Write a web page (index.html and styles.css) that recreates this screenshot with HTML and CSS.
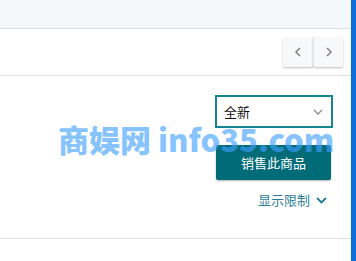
FILE: index.html
```html
<!DOCTYPE html>
<html lang="zh">
<head>
<meta charset="utf-8">
<link rel="stylesheet" href="styles.css">
</head>
<body>
<div class="page">
  <div class="main">
    <div class="topbar"></div>
    <div class="toolbar">
      <div class="pager">
        <button class="nav"><svg width="10" height="12" viewBox="0 0 10 12"><polyline points="7,2 3,6 7,10" fill="none" stroke="#8a8580" stroke-width="1.6"/></svg></button>
        <button class="nav"><svg width="10" height="12" viewBox="0 0 10 12"><polyline points="3,2 7,6 3,10" fill="none" stroke="#8a8580" stroke-width="1.6"/></svg></button>
      </div>
    </div>
    <div class="panel">
      <div class="select">
        <span>全新</span>
        <svg width="10" height="6" viewBox="0 0 10 6"><polyline points="1,1 5,5 9,1" fill="none" stroke="#8c8c8c" stroke-width="1.4"/></svg>
      </div>
      <button class="sell">销售此商品</button>
      <div class="limits">
        <span>显示限制</span>
        <svg width="11" height="7" viewBox="0 0 11 7"><polyline points="1,1 5.5,5.5 10,1" fill="none" stroke="#1f7a96" stroke-width="1.8"/></svg>
      </div>
    </div>
    <div class="watermark">商娱网 info35.com</div>
  </div>
  <div class="side"></div>
</div>
</body>
</html>
```
FILE: styles.css
```css
html, body {
  margin: 0;
  padding: 0;
  background: #fff;
}
body {
  font-family: "Noto Sans CJK SC", "Noto Sans", sans-serif;
}
.page {
  display: flex;
  height: 261px;
  overflow: hidden;
}
.main {
  flex: 1;
  position: relative;
}
.side {
  width: 5px;
  background: #0c6fd8;
}
.topbar {
  height: 28px;
  background: #f5f8fb;
  border-bottom: 1px solid #dcdfe3;
}
.toolbar {
  height: 46px;
  border-bottom: 1px solid #dcdfe3;
  display: flex;
  justify-content: flex-end;
  align-items: center;
  padding-right: 8px;
}
.pager {
  display: flex;
}
.nav {
  width: 30px;
  height: 30px;
  padding: 0;
  margin: 0;
  border: none;
  background: #f6f8fa;
  box-shadow: 0 1px 2px rgba(0,0,0,0.25);
  border-radius: 2px;
  display: flex;
  align-items: center;
  justify-content: center;
}
.nav + .nav {
  border-left: 1px solid #e2e5e8;
}
.panel {
  display: flex;
  flex-direction: column;
  align-items: flex-end;
  padding: 19px 18px 0 0;
  height: 143px;
  border-bottom: 1px solid #dcdfe3;
}
.select {
  box-sizing: border-box;
  width: 118px;
  height: 33px;
  border: 2px solid #148591;
  display: flex;
  align-items: center;
  justify-content: space-between;
  padding: 0 8px 0 7px;
  font-size: 13px;
  color: #111;
}
.sell {
  margin: 17px 2px 0 0;
  width: 115px;
  height: 35px;
  border: none;
  border-radius: 2px;
  background: #016b78;
  color: #fff;
  font-family: "Noto Sans CJK SC", sans-serif;
  font-size: 13px;
  box-shadow: 0 1px 2px rgba(0,0,0,0.3);
}
.limits {
  margin: 10px 6px 0 0;
  display: flex;
  align-items: center;
  gap: 6px;
  font-size: 13px;
  color: #2a7e98;
  line-height: 20px;
}
.watermark {
  position: absolute;
  left: 58px;
  top: 117px;
  font-size: 31px;
  font-weight: 900;
  color: rgba(64, 160, 255, 0.65);
  white-space: nowrap;
  font-family: "Noto Sans CJK SC", sans-serif;
  line-height: 44px;
  pointer-events: none;
}
```
